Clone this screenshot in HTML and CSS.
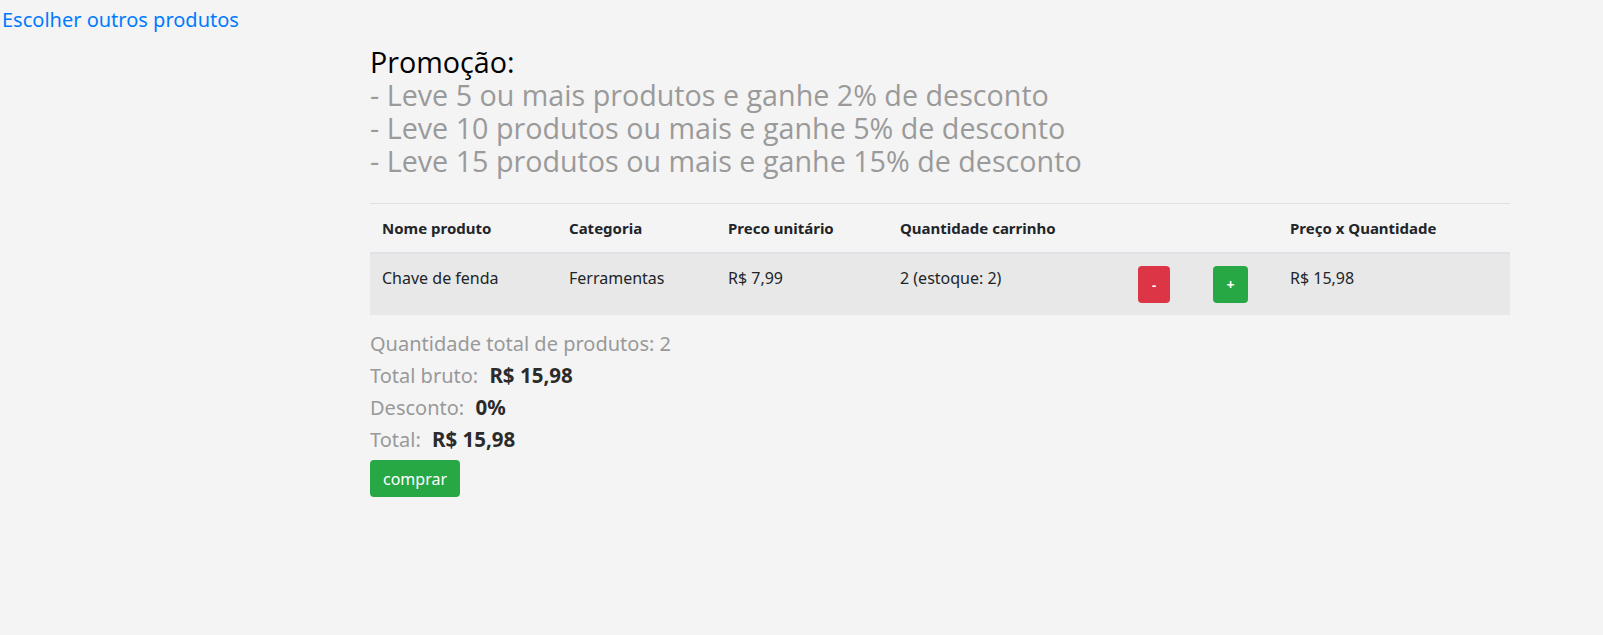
FILE: index.html
```html
<!DOCTYPE html>
<html lang="pt-BR">
<head>
<meta charset="utf-8">
<title>Carrinho</title>
<link rel="stylesheet" href="styles.css">
</head>
<body>
<a class="back-link" href="#">Escolher outros produtos</a>
<main class="cart">
  <h3 class="promo">
    <span class="promo-title">Promoção:</span>
    <span class="promo-line">- Leve 5 ou mais produtos e ganhe 2% de desconto</span>
    <span class="promo-line">- Leve 10 produtos ou mais e ganhe 5% de desconto</span>
    <span class="promo-line">- Leve 15 produtos ou mais e ganhe 15% de desconto</span>
  </h3>
  <table class="cart-table">
    <colgroup>
      <col class="c-name"><col class="c-cat"><col class="c-price"><col class="c-qty"><col class="c-minus"><col class="c-plus"><col class="c-total">
    </colgroup>
    <thead>
      <tr>
        <th>Nome produto</th>
        <th>Categoria</th>
        <th>Preco unitário</th>
        <th>Quantidade carrinho</th>
        <th></th>
        <th></th>
        <th>Preço x Quantidade</th>
      </tr>
    </thead>
    <tbody>
      <tr>
        <td>Chave de fenda</td>
        <td>Ferramentas</td>
        <td>R$ 7,99</td>
        <td>2 (estoque: 2)</td>
        <td><button class="btn btn-minus">-</button></td>
        <td><button class="btn btn-plus">+</button></td>
        <td>R$ 15,98</td>
      </tr>
    </tbody>
  </table>
  <div class="summary">
    <div class="sum-line">Quantidade total de produtos: 2</div>
    <div class="sum-line">Total bruto: <strong>R$ 15,98</strong></div>
    <div class="sum-line">Desconto: <strong>0%</strong></div>
    <div class="sum-line">Total: <strong>R$ 15,98</strong></div>
  </div>
  <button class="btn btn-buy">comprar</button>
</main>
</body>
</html>
```
FILE: styles.css
```css
html, body {
  margin: 0;
  padding: 0;
  background: #f4f4f4;
}
body {
  font-family: "Noto Sans", "DejaVu Sans", sans-serif;
  color: #212529;
}
.back-link {
  display: block;
  padding: 8px 0 0 2px;
  line-height: 24px;
  font-size: 20px;
  color: #007bff;
  text-decoration: none;
}
.cart {
  margin-left: 370px;
  width: 1140px;
}
.promo {
  margin: 13px 0 26px;
  font-family: "Open Sans", sans-serif;
  font-weight: 400;
  font-size: 28.7px;
  line-height: 33px;
}
.promo span { display: block; }
.promo-title { color: #000; }
.promo-line { color: #9a9a9a; }
.cart-table {
  width: 100%;
  border-collapse: collapse;
  table-layout: fixed;
  font-size: 16px;
}
.c-name { width: 187px; }
.c-cat { width: 159px; }
.c-price { width: 172px; }
.c-qty { width: 238px; }
.c-minus { width: 75px; }
.c-plus { width: 77px; }
.cart-table th, .cart-table td {
  text-align: left;
  vertical-align: top;
  padding: 12px;
  line-height: 24px;
}
.cart-table th {
  font-size: 15px;
  font-weight: 700;
  border-top: 1px solid #dee2e6;
  border-bottom: 2px solid #dee2e6;
}
.cart-table tbody tr { background: #e8e8e8; }
.btn {
  border: none;
  border-radius: 4px;
  color: #fff;
  font-family: inherit;
  font-weight: 700;
  cursor: pointer;
  padding: 0;
}
.btn-minus {
  background: #dc3545;
  width: 32px;
  height: 37px;
  font-size: 13px;
}
.btn-plus {
  background: #28a745;
  width: 35px;
  height: 37px;
  font-size: 14px;
}
.summary {
  margin-top: 13px;
  font-size: 20px;
  color: #999;
}
.sum-line {
  height: 32px;
  line-height: 32px;
}
.sum-line strong {
  color: #2b2b2b;
  font-size: 20.5px;
  line-height: 1;
  margin-left: 6px;
}
.btn-buy {
  display: block;
  margin-top: 4px;
  background: #28a745;
  width: 90px;
  height: 37px;
  font-size: 16px;
  font-weight: 400;
}
```
